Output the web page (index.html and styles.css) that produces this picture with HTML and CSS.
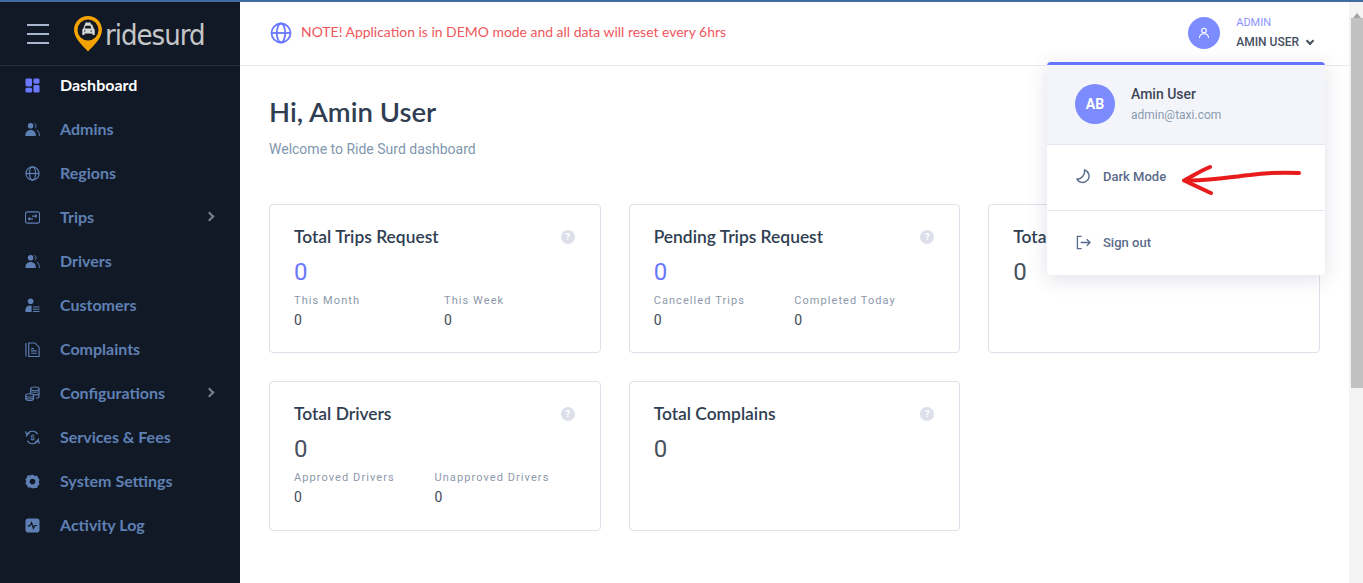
FILE: index.html
```html
<!DOCTYPE html>
<html>

<head>
    <meta charset="utf-8">
    <title>Ride Surd Dashboard</title>
    <link rel="stylesheet" href="styles.css">
</head>

<body>
    <div class="app">
        <aside class="sidebar">
            <div class="brand">
                <div class="burger"><span></span><span></span><span></span></div>
                <svg class="pin" viewBox="0 0 28 36" width="28" height="36">
                    <path fill="#f5a300" d="M14 0C6.3 0 0 6.2 0 13.8 0 23 10 31 14 35.500 18 31 28 23 28 13.800 28 6.200 21.700 0 14 0z" />
                    <circle cx="14" cy="14" r="10.500" fill="#151a22" />
                    <path fill="#d8d8d8" d="M11.500 6.500h5l.5 2h1.200l1.500 4 1 1v5.500h-2.200v-1.500H10.500V19H8.300v-5.500l1-1 1.500-4H11z" />
                    <path fill="#151a22" d="M11.600 9.800h4.800l1 2.700h-6.800zM10 14.500h1.500v1H10zM16.500 14.500H18v1h-1.500z" />
                </svg>
                <span class="brand-name">ridesurd</span>
            </div>
            <nav class="menu">
                <a class="menu-item active">
                    <svg viewBox="0 0 16 16"><rect x="0.500" y="0.500" width="7" height="8.500" rx="1.500" fill="#6a78ff" /><rect x="9" y="0.500" width="6.500" height="5.500" rx="1.500" fill="#6a78ff" /><rect x="0.500" y="10.500" width="7" height="5" rx="1.500" fill="#6a78ff" /><rect x="9" y="7.500" width="6.500" height="8" rx="1.500" fill="#6a78ff" /></svg>
                    <span>Dashboard</span>
                </a>
                <a class="menu-item">
                    <svg viewBox="0 0 16 16"><circle cx="6" cy="4" r="3" fill="currentColor" /><path fill="currentColor" d="M0.500 15c-.5-4 2-6.500 5.500-6.500s6 2.500 5.500 6.500z" /><path fill="none" stroke="currentColor" d="M10 1.500c2 .5 2.500 4 .5 5M12.500 8.500c2 1 3 3.500 2.800 6.500" /></svg>
                    <span>Admins</span>
                </a>
                <a class="menu-item">
                    <svg viewBox="0 0 16 16" fill="none" stroke="currentColor" stroke-width="1.300"><circle cx="8" cy="8" r="7" /><ellipse cx="8" cy="8" rx="3.200" ry="7" /><path d="M1 8h14" /></svg>
                    <span>Regions</span>
                </a>
                <a class="menu-item">
                    <svg viewBox="0 0 16 16" fill="none" stroke="currentColor" stroke-width="1.200"><rect x="0.500" y="2" width="15" height="12" rx="2" /><path d="M3.500 9.500h5M3.500 9.500l1.500-1.500M3.500 9.500l1.500 1.500M7.500 6.500h5M12.500 6.500l-1.500-1.500M12.500 6.500l-1.500 1.500" /></svg>
                    <span>Trips</span>
                    <i class="caret"></i>
                </a>
                <a class="menu-item">
                    <svg viewBox="0 0 16 16"><circle cx="6" cy="4" r="3" fill="currentColor" /><path fill="currentColor" d="M0.500 15c-.5-4 2-6.500 5.500-6.500s6 2.500 5.500 6.500z" /><path fill="none" stroke="currentColor" d="M10 1.500c2 .5 2.500 4 .5 5M12.500 8.500c2 1 3 3.500 2.800 6.500" /></svg>
                    <span>Drivers</span>
                </a>
                <a class="menu-item">
                    <svg viewBox="0 0 16 16"><circle cx="6" cy="3.500" r="3" fill="currentColor" /><path fill="currentColor" d="M0.500 15c-.5-4 1-7 5-7 .8 0 1.200.1 1.500.3V15z" /><path stroke="currentColor" stroke-width="1.100" d="M8.500 9.500h7M8.500 12h7M8.500 14.500h7" /></svg>
                    <span>Customers</span>
                </a>
                <a class="menu-item">
                    <svg viewBox="0 0 16 16" fill="none" stroke="currentColor" stroke-width="1.200"><path d="M1 1v14.500" /><path d="M4 1h6.500L15 5.500v10H4z" /><path d="M6.500 7h3M6.500 9.500h6M6.500 12h6" /></svg>
                    <span>Complaints</span>
                </a>
                <a class="menu-item">
                    <svg viewBox="0 0 16 16" fill="none" stroke="currentColor" stroke-width="1.100"><ellipse cx="10.500" cy="3" rx="4.500" ry="2" /><path d="M6 3v6M15 3v8c0 1-1 2-3 2M6 6c1.500 1 7.500 1 9 0M8 9c2 .5 5.500.5 7-.5" /><ellipse cx="5" cy="10" rx="4.200" ry="1.800" /><path d="M.8 10v3.500c0 1 1.800 2 4.200 2s4.200-1 4.200-2V10M.8 13c1 1 7.400 1 8.400 0" /></svg>
                    <span>Configurations</span>
                    <i class="caret"></i>
                </a>
                <a class="menu-item">
                    <svg viewBox="0 0 16 16" fill="none" stroke="currentColor" stroke-width="1.300"><path d="M1.500 7A6.500 6.500 0 0 1 13.500 4.500M14.500 9A6.500 6.500 0 0 1 2.500 11.500" /><path d="M0.500 1.500L2 5l3-1.500M15.500 14.500L14 11l-3 1.500" /><text x="8" y="11" font-size="8.500" font-weight="700" font-family="Roboto, sans-serif" text-anchor="middle" fill="currentColor" stroke="none">$</text></svg>
                    <span>Services &amp; Fees</span>
                </a>
                <a class="menu-item">
                    <svg viewBox="0 0 16 16"><path fill="currentColor" fill-rule="evenodd" d="M8 .5l2.300 1.500 2.800-.1 1 2.500 1.400 1.600-.8 2.500.8 2.500-1.900 1.800-.7 2.200-2.800-.2L8 15.500l-2.100-1.200-2.800.2-.7-2.200L.5 10.500 1.300 8 .5 5.500l1.400-1.600 1-2.500 2.800.1zM8 5a3 3 0 1 0 0 6 3 3 0 0 0 0-6z" /></svg>
                    <span>System Settings</span>
                </a>
                <a class="menu-item">
                    <svg viewBox="0 0 16 16"><rect x="0.500" y="0.500" width="15" height="15" rx="3" fill="currentColor" /><path fill="none" stroke="#111926" stroke-width="1.300" d="M3 8.500h2.200L7 5l2 6 1.500-3H13" /></svg>
                    <span>Activity Log</span>
                </a>
            </nav>
        </aside>

        <div class="main">
            <header class="topbar">
                <svg class="note-icon" viewBox="0 0 22 22" fill="none" stroke="currentColor" stroke-width="1.800"><circle cx="11" cy="11" r="9.500" /><ellipse cx="11" cy="11" rx="4.200" ry="9.500" /><path d="M1.500 11h19" /></svg>
                <span class="note">NOTE! Application is in DEMO mode and all data will reset every 6hrs</span>
                <div class="user">
                    <div class="user-avatar">
                        <svg viewBox="0 0 12 12" width="12" height="12" fill="none" stroke="#fff" stroke-width="1.100"><circle cx="6" cy="3.500" r="2.300" /><path d="M1.500 11c0-3 2-4.200 4.500-4.200s4.500 1.200 4.500 4.200" /></svg>
                    </div>
                    <div class="user-text">
                        <div class="user-role">ADMIN</div>
                        <div class="user-name">AMIN USER <i class="chevron"></i></div>
                    </div>
                </div>
            </header>

            <section class="content">
                <h1>Hi, Amin User</h1>
                <p class="welcome">Welcome to Ride Surd dashboard</p>

                <div class="cards">
                    <div class="card">
                        <div class="card-head"><h3>Total Trips Request</h3><span class="help">?</span></div>
                        <div class="count blue">0</div>
                        <div class="stats">
                            <div class="stat"><label>This Month</label><b>0</b></div>
                            <div class="stat"><label>This Week</label><b>0</b></div>
                        </div>
                    </div>
                    <div class="card">
                        <div class="card-head"><h3>Pending Trips Request</h3><span class="help">?</span></div>
                        <div class="count blue">0</div>
                        <div class="stats">
                            <div class="stat narrow"><label>Cancelled Trips</label><b>0</b></div>
                            <div class="stat narrow"><label>Completed Today</label><b>0</b></div>
                        </div>
                    </div>
                    <div class="card">
                        <div class="card-head"><h3>Total</h3><span class="help">?</span></div>
                        <div class="count">0</div>
                    </div>
                    <div class="card tall">
                        <div class="card-head"><h3>Total Drivers</h3><span class="help">?</span></div>
                        <div class="count">0</div>
                        <div class="stats">
                            <div class="stat narrow"><label>Approved Drivers</label><b>0</b></div>
                            <div class="stat narrow"><label>Unapproved Drivers</label><b>0</b></div>
                        </div>
                    </div>
                    <div class="card tall">
                        <div class="card-head"><h3>Total Complains</h3><span class="help">?</span></div>
                        <div class="count">0</div>
                    </div>
                </div>
            </section>
        </div>

        <div class="scrollbar">
            <div class="scroll-up"></div>
            <div class="scroll-thumb"></div>
        </div>

        <div class="dropdown">
            <div class="dropdown-head">
                <div class="dropdown-avatar">AB</div>
                <div>
                    <div class="dropdown-name">Amin User</div>
                    <div class="dropdown-mail">admin@taxi.com</div>
                </div>
            </div>
            <a class="dropdown-item">
                <svg viewBox="0 0 16 16" fill="none" stroke="currentColor" stroke-width="1.500" stroke-linejoin="round"><path d="M9 1A6.800 6.800 0 1 1 1 10.500C5.500 11.500 10 6 9 1z" /></svg>
                <span>Dark Mode</span>
            </a>
            <a class="dropdown-item">
                <svg viewBox="0 0 16 16" fill="none" stroke="currentColor" stroke-width="1.400"><path d="M6 1.500H1.500v13H6M5 8h10M11.500 4.500L15 8l-3.500 3.500" /></svg>
                <span>Sign out</span>
            </a>
            <svg class="red-arrow" viewBox="0 0 124 32" width="124" height="32" fill="none" stroke="#e81c1c" stroke-width="4" stroke-linecap="round" stroke-linejoin="round">
                <path d="M119 10C100 9 85 10 70 12 50 14 30 18 7 17.500" />
                <path d="M30 4C20 8 13 13 4 17.500 12 21 22 26 31 30" />
            </svg>
        </div>
    </div>
</body>

</html>
```

FILE: styles.css
```css
* {
    box-sizing: border-box;
}

html,
body {
    height: 100%;
}

body {
    margin: 0;
    font-family: Roboto, Arial, sans-serif;
    color: #2f3e52;
    background-color: #fff;
    overflow: hidden;
}

h1,
h3,
p {
    margin: 0;
}

.app {
    display: flex;
    position: relative;
    height: 100vh;
    border-top: 2px solid #3f6c9e;
}

/* sidebar */
.sidebar {
    width: 240px;
    flex: none;
    background-color: #111926;
}

.brand {
    display: flex;
    align-items: center;
    height: 64px;
    padding-left: 27px;
    border-bottom: 1px solid #222e3e;
}

.burger {
    display: flex;
    flex-direction: column;
    gap: 7px;
    width: 22px;
    margin-right: 25px;
}

.burger span {
    height: 2px;
    background-color: #a9b8d0;
}

.pin {
    margin-top: 0;
    margin-right: 3px;
}

.brand-name {
    font-family: "DejaVu Sans", sans-serif;
    font-stretch: condensed;
    font-size: 29px;
    line-height: 34px;
    color: #c4c6c8;
    margin-top: 3px;
    letter-spacing: -1px;
}

.menu {
    margin-top: -4px;
}

.menu-item {
    display: flex;
    align-items: center;
    height: 44px;
    padding: 0 24px 0 25px;
    color: #5f80b4;
    font-family: Lato, sans-serif;
    font-size: 16px;
    font-weight: 700;
}

.menu-item svg {
    width: 15px;
    height: 15px;
    flex: none;
    margin-right: 20px;
    position: relative;
    top: 1px;
}

.menu-item.active {
    color: #fff;
}

.caret {
    width: 7px;
    height: 7px;
    margin-left: auto;
    margin-right: 3px;
    border-top: 2px solid #77828f;
    border-right: 2px solid #77828f;
    transform: rotate(45deg);
}

/* top bar */
.main {
    flex: 1;
    min-width: 0;
}

.topbar {
    display: flex;
    align-items: center;
    height: 64px;
    padding-left: 30px;
    padding-bottom: 2px;
    border-bottom: 1px solid #e8eaf0;
}

.note-icon {
    width: 22px;
    height: 22px;
    color: #6a78ff;
    margin-right: 9px;
}

.note {
    font-family: Lato, sans-serif;
    font-size: 13.950px;
    color: #f0565c;
    margin-bottom: 2px;
}

.user {
    display: flex;
    align-items: center;
    margin-left: auto;
    margin-right: 36px;
}

.user-avatar {
    display: flex;
    align-items: center;
    justify-content: center;
    width: 32px;
    height: 32px;
    margin-right: 16px;
    border-radius: 50%;
    background-color: #7c8cff;
}

.user-text {
    margin-bottom: 1px;
}

.user-role {
    font-size: 11px;
    line-height: 14px;
    color: #8c93ff;
    margin-bottom: 5px;
}

.user-name {
    font-size: 12px;
    line-height: 14px;
    font-weight: 500;
    color: #46505f;
}

.chevron {
    display: inline-block;
    width: 6px;
    height: 6px;
    margin-left: 5px;
    position: relative;
    top: -2px;
    border-right: 2px solid #46505f;
    border-bottom: 2px solid #46505f;
    transform: rotate(45deg);
}

/* dashboard */
.content {
    padding: 28px 29px 0;
}

h1 {
    font-family: Lato, sans-serif;
    font-size: 27.500px;
    line-height: 36px;
    font-weight: 600;
    color: #2f3e52;
}

.welcome {
    margin-top: 9px;
    font-size: 14px;
    line-height: 20px;
    color: #8197ae;
}

.cards {
    display: grid;
    grid-template-columns: repeat(3, minmax(0, 1fr));
    gap: 28px;
    margin-top: 45px;
}

.card {
    height: 149px;
    padding: 20px 25px 0 24px;
    border: 1px solid #dfe1ea;
    border-radius: 4px;
    background-color: #fff;
}

.card.tall {
    height: 150px;
}

.card-head {
    display: flex;
    justify-content: space-between;
    align-items: center;
    height: 24px;
}

h3 {
    font-family: Lato, sans-serif;
    font-size: 17.400px;
    line-height: 24px;
    font-weight: 600;
    color: #2f3e52;
}

.help {
    width: 14px;
    height: 14px;
    border-radius: 50%;
    background-color: #dde0ea;
    color: #fff;
    font-size: 9px;
    font-weight: 700;
    line-height: 14px;
    text-align: center;
}

.count {
    margin-top: 8px;
    font-size: 24px;
    line-height: 30px;
    color: #48525f;
}

.count.blue {
    color: #6a78ff;
}

.stats {
    display: flex;
    margin-top: 6px;
}

.stat {
    width: 150px;
    flex: none;
}

.stat.narrow {
    width: 140.500px;
}

.stat label {
    display: block;
    font-size: 11px;
    line-height: 16px;
    letter-spacing: 1.080px;
    color: #8c99ab;
    white-space: nowrap;
}

.stat b {
    display: block;
    margin-top: 2px;
    font-size: 14px;
    line-height: 18px;
    font-weight: 400;
    color: #3f4a58;
}

/* scrollbar drawn by hand, the photo has one */
.scrollbar {
    width: 14px;
    flex: none;
    padding-left: 2px;
    background-color: #f3f3f3;
}

.scroll-up {
    width: 0;
    margin-left: 2px;
    border-left: 4px solid transparent;
    border-right: 4px solid transparent;
    border-bottom: 5px solid #a3a3a3;
    border-top: 5px solid transparent;
    box-sizing: content-box;
    height: 0;
    padding-bottom: 6px;
}

.scroll-thumb {
    height: 370px;
    background-color: #c1c1c1;
}

/* user dropdown, sits over the cards */
.dropdown {
    position: absolute;
    top: 60px;
    left: 1047px;
    width: 278px;
    height: 213px;
    border-top: 3px solid #6574ff;
    border-radius: 4px;
    background-color: #fff;
    box-shadow: 0 4px 20px rgba(60, 70, 110, 0.16);
}

.dropdown-head {
    display: flex;
    align-items: center;
    height: 80px;
    padding-left: 28px;
    padding-bottom: 2px;
    border-bottom: 1px solid #e4e7f0;
    background-color: #f4f5fa;
}

.dropdown-avatar {
    display: flex;
    align-items: center;
    justify-content: center;
    width: 40px;
    height: 40px;
    margin-right: 16px;
    border-radius: 50%;
    background-color: #7c8cff;
    color: #fff;
    font-size: 14px;
    font-weight: 700;
}

.dropdown-name {
    font-size: 14px;
    line-height: 18px;
    font-weight: 500;
    color: #3d4756;
}

.dropdown-mail {
    margin-top: 4px;
    font-size: 12px;
    line-height: 16px;
    color: #8a9ab0;
}

.dropdown-item {
    display: flex;
    align-items: center;
    height: 66px;
    padding-left: 29px;
    padding-bottom: 2px;
    border-bottom: 1px solid #e4e7f0;
    color: #5a6a8a;
    font-size: 13px;
    font-weight: 500;
}

.dropdown-item:last-of-type {
    height: 64px;
    border-bottom: 0;
}

.dropdown-item svg {
    width: 15px;
    height: 15px;
    margin-right: 12px;
}

.red-arrow {
    position: absolute;
    top: 98px;
    left: 133px;
}
```
